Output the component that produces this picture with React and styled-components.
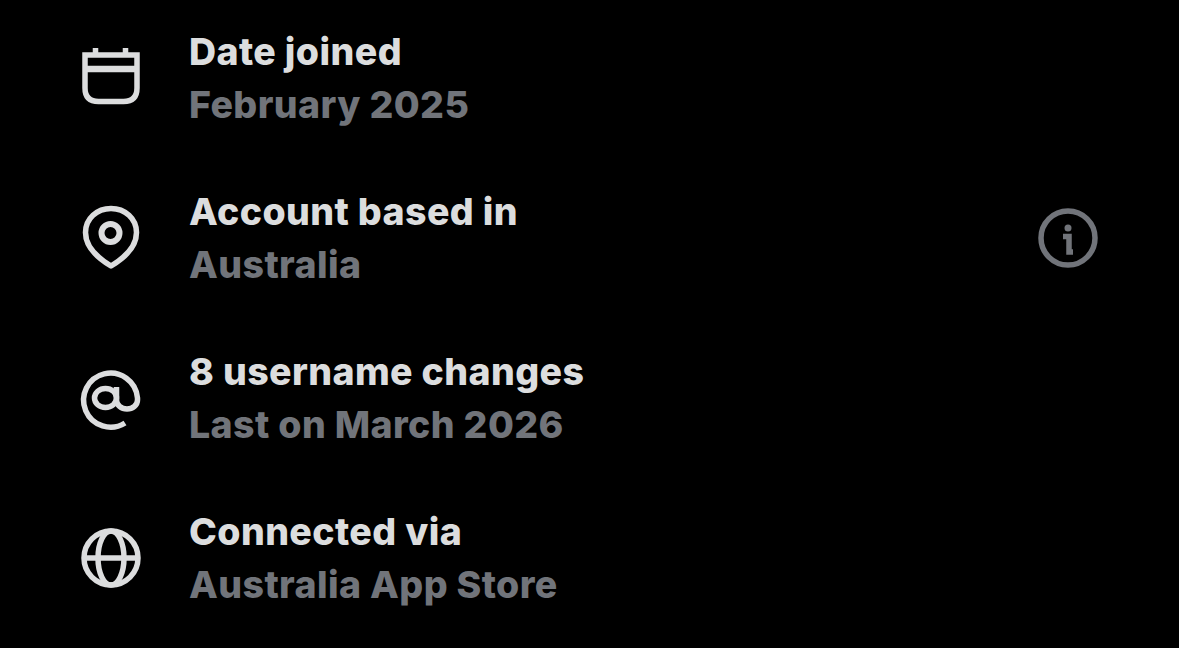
import React from 'react';
import styled, { createGlobalStyle } from 'styled-components';

const GlobalStyle = createGlobalStyle`
  html, body {
    margin: 0;
    height: 100%;
    background: #000000;
    overflow: hidden;
  }
`;

const List = styled.div`
  width: 1179px;
  height: 648px;
  margin-top: -2px;
  padding: 0 81px;
  box-sizing: border-box;
  background: #000000;
  font-family: Inter, 'Liberation Sans', sans-serif;
`;

const Row = styled.div`
  display: flex;
  align-items: center;
  height: 160px;
`;

const Icon = styled.svg`
  flex: none;
  width: 60px;
  height: 60px;
  overflow: visible;
  fill: none;
  stroke: ${(p) => (p.$muted ? '#71747a' : '#dcddde')};
  stroke-width: 5.5;
`;

const Text = styled.div`
  flex: 1;
  margin-left: 48px;
`;

const Title = styled.div`
  font-size: 37.5px;
  font-weight: 800;
  line-height: 53px;
  letter-spacing: 0.4px;
  color: #dcddde;
`;

const Subtitle = styled(Title)`
  color: #71747a;
`;

const CalendarIcon = () => (
  <Icon viewBox="0 0 60 60">
    <path d="M4 7H56V40Q56 53.500 42.500 53.500H17.500Q4 53.500 4 40Z" />
    <path d="M4 21H56" strokeWidth="6.500" />
    <path d="M14.500 0V6M44.500 0V6" />
  </Icon>
);

const PinIcon = () => (
  <Icon viewBox="0 0 60 60">
    <path d="M30 58 C20 52 4.500 41 4.500 24.500 C4.500 10.500 16 0.500 30 0.500 C44 0.500 55.500 10.500 55.500 24.500 C55.500 41 40 52 30 58Z" strokeLinejoin="round" />
    <circle cx="29.500" cy="25" r="9" strokeWidth="6" />
  </Icon>
);

const AtIcon = () => (
  <Icon viewBox="0 0 60 60">
    <path d="M44 55 A27 27 0 1 1 56.500 30 V32 A10.500 9 0 0 1 35.500 32 V19" />
    <ellipse cx="24.500" cy="30" rx="11" ry="9.500" />
  </Icon>
);

const GlobeIcon = () => (
  <Icon viewBox="0 0 60 60">
    <circle cx="30" cy="30" r="27" />
    <ellipse cx="30" cy="30" rx="13" ry="27" />
    <path d="M3 30H57" />
  </Icon>
);

const InfoIcon = () => (
  <Icon viewBox="0 0 60 60" $muted>
    <circle cx="30" cy="30" r="27" />
    <circle cx="30" cy="20" r="3.500" fill="#71747a" stroke="none" />
    <path d="M25 28.500H31V44H35" strokeWidth="5.500" />
  </Icon>
);

const rows = [
  { icon: <CalendarIcon />, title: 'Date joined', subtitle: 'February 2025' },
  { icon: <PinIcon />, title: 'Account based in', subtitle: 'Australia', info: true },
  { icon: <AtIcon />, title: '8 username changes', subtitle: 'Last on March 2026' },
  { icon: <GlobeIcon />, title: 'Connected via', subtitle: 'Australia App Store' },
];

export default function App() {
  return (
    <List>
      <GlobalStyle />
      {rows.map((row) => (
        <Row key={row.title}>
          {row.icon}
          <Text>
            <Title>{row.title}</Title>
            <Subtitle>{row.subtitle}</Subtitle>
          </Text>
          {row.info && <InfoIcon />}
        </Row>
      ))}
    </List>
  );
}
